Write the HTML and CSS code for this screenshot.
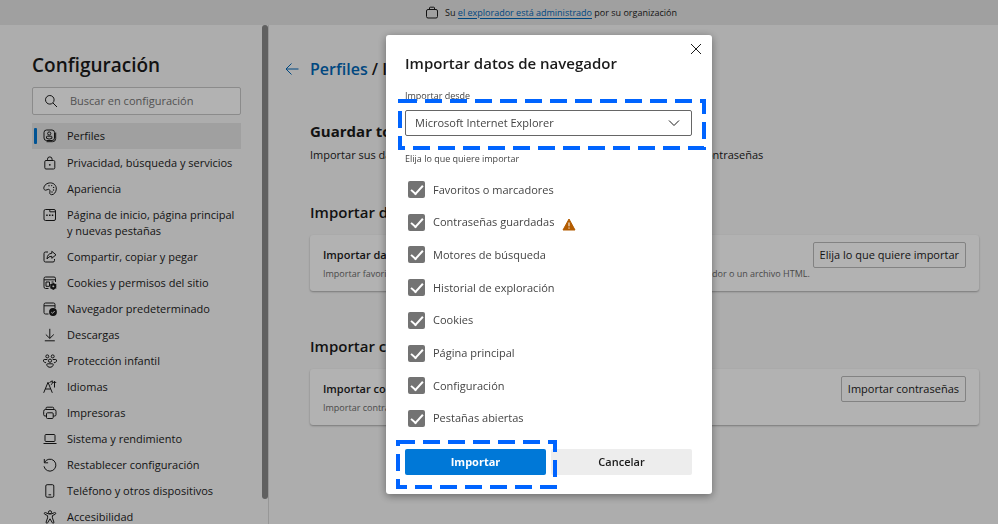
FILE: index.html
```html
<!DOCTYPE html>
<html lang="es">
<head>
<meta charset="utf-8">
<meta name="viewport" content="width=device-width, initial-scale=1">
<title>Configuración</title>
<link rel="stylesheet" href="styles.css">
</head>
<body>
<div class="banner">
  <svg class="banner-icon" viewBox="0 0 14 14"><rect x="1.500" y="3.500" width="11" height="8.500" rx="1.500"/><path d="M4.500 3.500V2q0-.8.8-.8h3.400q.8 0 .8.8v1.500"/></svg>
  <p>Su <a href="#">el explorador está administrado</a> por su organización</p>
</div>
<div class="layout">
  <aside class="sidebar">
    <h1>Configuración</h1>
    <div class="search">
      <svg class="icon" viewBox="0 0 14 14"><circle cx="5.8" cy="5.8" r="4.3"/><path d="m9 9 4 4"/></svg>
      <input type="search" placeholder="Buscar en configuración" aria-label="Buscar en configuración">
    </div>
    <nav>
      <a class="item active" href="#"><svg class="icon" viewBox="0 0 14 14"><rect x="1" y="1" width="10.500" height="10.500" rx="2.500"/><circle cx="6.200" cy="4.500" r="1.600"/><path d="M3.500 9.300V8q0-.8.8-.8h3.800q.8 0 .8.8v1.300q-2.700 1.600-5.400 0zM12.700 3.500v6q0 3.200-3.200 3.200h-6"/></svg><span>Perfiles</span></a>
      <a class="item" href="#"><svg class="icon" viewBox="0 0 14 14"><rect x="1.800" y="4.500" width="10" height="8.500" rx="1.200"/><path d="M4.500 4.500V3.200a2.300 2.300 0 0 1 4.600 0v1.300"/><circle class="solid" cx="6.800" cy="8.800" r=".9"/></svg><span>Privacidad, búsqueda y servicios</span></a>
      <a class="item" href="#"><svg class="icon" viewBox="0 0 14 14"><path d="M.8 6.200C.9 3.200 4 .8 7.500.9c3.500.1 6 2.700 5.800 6.200-.2 3.100-2.400 5.700-4.700 5.600-1.800-.1-2-1.300-1.700-2.600.3-1.500-.1-2.700-1.300-2.800-1.400-.1-1.700 1-3 .9C1.400 8.100.8 7.300.8 6.200z"/><g class="solid"><circle cx="6" cy="3.800" r=".7"/><circle cx="8.700" cy="3.600" r=".7"/><circle cx="10.600" cy="5.400" r=".7"/><circle cx="10.500" cy="8" r=".7"/><circle cx="9" cy="10" r=".7"/></g></svg><span>Apariencia</span></a>
      <a class="item" href="#"><svg class="icon" viewBox="0 0 14 14"><rect x="1" y="1.500" width="11.500" height="11" rx="1.500"/><path d="M6.800 1.500v2.300h5.700"/><g class="solid"><rect x="3.200" y="6.500" width="1.500" height="1.500"/><rect x="6" y="6.500" width="1.500" height="1.500"/><rect x="8.800" y="6.500" width="1.500" height="1.500"/></g></svg><span>Página de inicio, página principal y nuevas pestañas</span></a>
      <a class="item" href="#"><svg class="icon" viewBox="0 0 14 14"><path d="M5 2H2.500Q1 2 1 3.500v7Q1 12 2.500 12h7.500q1.500 0 1.500-1.500V9"/><path d="M8.800 1.300 13 4.800 8.800 8.300V6.300Q5.500 6.100 4 9q.2-5.300 4.800-5.700z"/></svg><span>Compartir, copiar y pegar</span></a>
      <a class="item" href="#"><svg class="icon" viewBox="0 0 14 14"><path d="M12.500 6V2.500Q12.500 1 11 1H2.500Q1 1 1 2.500v8.300Q1 12.500 2.500 12.500h3M1 3.800h11.500M3 6h3.500v4.300H3zM8.500 6h2"/><circle class="gear" cx="10.300" cy="10.300" r="2.100"/><path d="M10.300 6.800v7M7.300 8.500l6 3.600M7.300 12.100l6-3.600"/><circle class="hole" cx="10.300" cy="10.300" r=".9"/></svg><span>Cookies y permisos del sitio</span></a>
      <a class="item" href="#"><svg class="icon" viewBox="0 0 14 14"><path d="M12 6V2.500Q12 1 10.500 1H2.500Q1 1 1 2.500v8Q1 12 2.500 12H5.500M1 3.800h11"/><circle class="solid" cx="10" cy="10" r="3.900"/><path class="mark" d="m8.300 10.200 1.200 1.100 2.200-2.300"/></svg><span>Navegador predeterminado</span></a>
      <a class="item" href="#"><svg class="icon" viewBox="0 0 14 14"><path d="M6.800.8v9.500M2.800 6.500l4 3.900 4-3.900M1.800 12.800h10"/></svg><span>Descargas</span></a>
      <a class="item" href="#"><svg class="icon" viewBox="0 0 14 14"><circle cx="4.300" cy="2.400" r="1.500"/><circle cx="9.700" cy="2.400" r="1.500"/><circle cx="7" cy="6.700" r="1.600"/><path d="M4.300 5.500H1.200Q-.1 5.700.5 7.200q.7 1.500 2.600 1.600M9.700 5.500h3.100q1.300.2.700 1.700-.7 1.500-2.600 1.600M4.500 9.800h5q1 .1.700 1.400-.7 2.100-3.200 2.100t-3.200-2.100q-.3-1.300.7-1.400z"/></svg><span>Protección infantil</span></a>
      <a class="item" href="#"><svg class="icon" viewBox="0 0 14 14"><path d="M.7 12.800 5 2.300l4.300 10.500M2.300 9h5.400M6.500 2.500l2.800-1.700v2.700L7.800 4.800M11.500 7.500V1.300M9.800 3l1.700-1.700L13.200 3"/></svg><span>Idiomas</span></a>
      <a class="item" href="#"><svg class="icon" viewBox="0 0 14 14"><path d="M3.500 10H2Q.7 10 .7 8.700V5.300Q.7 3.500 2.500 3.500h8.700q1.800 0 1.800 1.800v3.400Q13 10 11.700 10h-1.500M3 3.500V2.300Q3 1.200 4.100 1.200h5.500q1.100 0 1.100 1.100v1.200"/><rect x="3.500" y="6.800" width="6.700" height="5.700" rx="1"/></svg><span>Impresoras</span></a>
      <a class="item" href="#"><svg class="icon" viewBox="0 0 14 14"><rect x="2" y="2.500" width="10" height="7" rx="1"/><path d="M.5 11.500h13"/></svg><span>Sistema y rendimiento</span></a>
      <a class="item" href="#"><svg class="icon" viewBox="0 0 14 14"><path d="M1.500 4.500a6 6 0 1 1-.5 3.800M1.300 1v3.800h3.800"/></svg><span>Restablecer configuración</span></a>
      <a class="item" href="#"><svg class="icon" viewBox="0 0 14 14"><rect x="2.800" y=".7" width="8" height="12.500" rx="1.300"/><path d="M5.500 10.800h2.600"/></svg><span>Teléfono y otros dispositivos</span></a>
      <a class="item" href="#"><svg class="icon" viewBox="0 0 14 14"><circle cx="7" cy="2.300" r="1.600"/><path d="M5.300 3.800 2.500 2.600q-1.200-.2-1.200.8 0 .6.600.9l2.700 1.300v2.200l-1.500 4.300q-.1 1.100.8 1.200.6 0 .9-.8L7 8.800l2.200 3.700q.3.800.9.800.9-.1.800-1.200L9.400 7.800V5.600l2.700-1.300q.6-.3.600-.9 0-1-1.200-.8L8.700 3.800z"/></svg><span>Accesibilidad</span></a>
    </nav>
  </aside>
  <div class="scrollbar"><div class="thumb"></div></div>
  <main>
    <div class="crumbs">
      <svg class="back" viewBox="0 0 14 14"><path d="M13.500 7H1M6.500 1.500 1 7l5.500 5.500"/></svg>
      <p><a href="#">Perfiles</a> / Importar</p>
    </div>
    <h2 class="lead">Guardar todo en un solo lugar</h2>
    <p class="intro">Importar sus datos de exploración para usar aquí sus favoritos, historiales y contraseñas</p>
    <section>
      <h2>Importar datos</h2>
      <div class="card">
        <div>
          <h3>Importar datos</h3>
          <p>Importar favoritos, contraseñas, historiales, cookies y diversos elementos desde otro explorador o un archivo HTML.</p>
        </div>
        <button type="button">Elija lo que quiere importar</button>
      </div>
    </section>
    <section>
      <h2>Importar contraseñas</h2>
      <div class="card">
        <div>
          <h3>Importar contraseñas</h3>
          <p>Importar contraseñas desde un archivo CSV</p>
        </div>
        <button type="button">Importar contraseñas</button>
      </div>
    </section>
  </main>
</div>
<div class="backdrop">
  <form class="dialog" role="dialog" aria-labelledby="dialog-title">
    <button class="close" type="button" aria-label="Cerrar"><svg viewBox="0 0 12 12"><path d="m1 1 10 10M11 1 1 11"/></svg></button>
    <h2 id="dialog-title">Importar datos de navegador</h2>
    <label class="caption" for="source">Importar desde</label>
    <div class="select">
      <select id="source"><option>Microsoft Internet Explorer</option></select>
      <svg class="chevron" viewBox="0 0 12 8"><path d="m1 1.500 5 5 5-5"/></svg>
      <svg class="highlight highlight-source" viewBox="0 0 308 51"><rect x="2" y="2" width="304" height="47"/></svg>
    </div>
    <div class="group" role="group" aria-labelledby="group-title">
      <p class="caption" id="group-title">Elija lo que quiere importar</p>
      <div class="options">
        <label><input type="checkbox" checked><span>Favoritos o marcadores</span></label>
        <label><input type="checkbox" checked><span>Contraseñas guardadas</span><svg class="warning" viewBox="0 0 14 13"><path d="M7 1 13 12H1z"/><path class="bang" d="M7 4.500v3.800M7 9.500v1.200"/></svg></label>
        <label><input type="checkbox" checked><span>Motores de búsqueda</span></label>
        <label><input type="checkbox" checked><span>Historial de exploración</span></label>
        <label><input type="checkbox" checked><span>Cookies</span></label>
        <label><input type="checkbox" checked><span>Página principal</span></label>
        <label><input type="checkbox" checked><span>Configuración</span></label>
        <label><input type="checkbox" checked><span>Pestañas abiertas</span></label>
      </div>
    </div>
    <div class="actions">
      <button class="primary" type="button">Importar</button>
      <button type="button">Cancelar</button>
      <svg class="highlight highlight-import" viewBox="0 0 161 49"><rect x="2" y="2" width="157" height="45"/></svg>
    </div>
  </form>
</div>
</body>
</html>
```
FILE: styles.css
```css
* {
  box-sizing: border-box;
}

body {
  display: flex;
  flex-direction: column;
  height: 100vh;
  margin: 0;
  overflow: hidden;
  background: #f8f8f8;
  color: #1b1b1b;
  font: 11px/16px "Segoe UI", "Open Sans", sans-serif;
}

h1, h2, h3, p {
  margin: 0;
}

a {
  color: #0067b8;
}

button, input, select {
  font: inherit;
  color: inherit;
}

svg {
  flex: none;
  fill: none;
  stroke: currentColor;
  stroke-width: 1;
}

.banner {
  display: flex;
  flex: none;
  align-items: center;
  justify-content: center;
  gap: 6px;
  height: 25px;
  padding-left: 104px;
  background: #e6e6e6;
  font-size: 9px;
}

.banner a {
  text-underline-offset: 2px;
}

.banner-icon {
  width: 14px;
  height: 14px;
}

.layout {
  display: flex;
  flex: 1;
  min-height: 0;
}

/* Sidebar */

.sidebar {
  flex: none;
  width: 262px;
  padding: 27px 21px 0 32px;
  overflow: hidden;
}

h1 {
  font-size: 19px;
  line-height: 26px;
  font-weight: 600;
}

.icon {
  width: 14px;
  height: 14px;
}

.icon .solid {
  fill: currentColor;
  stroke: none;
}

.icon .gear {
  stroke-width: 2;
}

.icon .hole {
  fill: #f8f8f8;
  stroke: none;
}

.icon .mark {
  stroke: #f8f8f8;
}

.search {
  display: flex;
  align-items: center;
  gap: 12px;
  height: 28px;
  margin: 9px 0 8px;
  padding: 0 11px;
  border: 1px solid #c8c8c8;
  border-radius: 2px;
  background: #fff;
}

.search input {
  flex: 1;
  min-width: 0;
  padding: 0;
  border: 0;
  outline: 0;
  background: none;
}

.search input::placeholder {
  color: #767676;
}

.item {
  display: flex;
  gap: 10px;
  padding: 5px 4px 5px 11px;
  color: inherit;
  text-decoration: none;
}

.item .icon {
  margin-top: 1px;
}

.active {
  position: relative;
  margin-bottom: 1px;
  background: #e6e6e6;
}

.active::before {
  position: absolute;
  top: 5px;
  bottom: 5px;
  left: 2px;
  width: 3px;
  border-radius: 1px;
  background: #0078d4;
  content: "";
}

.scrollbar {
  flex: none;
  width: 7px;
  border-right: 1px solid #d8d8d8;
}

.thumb {
  height: 95%;
  max-height: 476px;
  border-radius: 3px;
  background: #8a8a8a;
}

/* Page behind the dialog */

main {
  flex: 1;
  min-width: 0;
  padding: 32px 19px 0 41px;
}

.crumbs {
  display: flex;
  align-items: center;
  gap: 11px;
  margin-left: -25px;
  font-size: 16px;
  line-height: 24px;
  font-weight: 600;
}

.crumbs a {
  text-decoration: none;
}

.back {
  width: 14px;
  height: 14px;
  color: #0067b8;
}

main h2 {
  font-size: 15px;
  line-height: 24px;
  font-weight: 600;
}

main .lead {
  margin-top: 38px;
  font-weight: 700;
}

.intro {
  margin: 4px 0 37px;
}

.card {
  display: flex;
  align-items: flex-start;
  justify-content: space-between;
  min-height: 56px;
  margin: 11px 0 43px;
  padding: 7px 13px 8px;
  border-radius: 3px;
  background: #fff;
  box-shadow: 0 1px 2px rgba(0, 0, 0, .3);
}

.card > div {
  padding-top: 5px;
}

.card h3 {
  font-size: 11px;
  line-height: 16px;
  font-weight: 600;
}

.card p {
  margin-top: 3px;
  color: #6b6b6b;
  font-size: 9px;
}

.card button {
  flex: none;
  height: 26px;
  padding: 0 6px;
  border: 1px solid #bbb;
  border-radius: 2px;
  background: #fff;
}

/* Dialog */

.backdrop {
  position: fixed;
  inset: 0;
  display: flex;
  align-items: flex-start;
  justify-content: center;
  padding: 35px 0 0 100px;
  background: rgba(0, 0, 0, .3);
}

.dialog {
  position: relative;
  display: flex;
  flex-direction: column;
  width: 326px;
  min-height: 459px;
  padding: 16px 20px 19px 19px;
  border-radius: 3px;
  background: #fff;
  box-shadow: 0 2px 8px rgba(0, 0, 0, .4);
}

.dialog h2 {
  font-size: 15px;
  line-height: 24px;
  font-weight: 600;
}

.close {
  position: absolute;
  top: 4px;
  right: 6px;
  display: grid;
  place-items: center;
  width: 20px;
  height: 20px;
  padding: 0;
  border: 0;
  background: none;
}

.close svg {
  width: 12px;
  height: 12px;
}

.caption {
  padding: 0;
  color: #444;
  font-size: 9px;
}

label.caption {
  margin-top: 13px;
}

.select {
  position: relative;
  margin-top: 6px;
}

.select select {
  display: block;
  width: 100%;
  height: 26px;
  padding: 0 9px;
  border: 1px solid #666;
  border-radius: 2px;
  background: #fff;
  color: #444;
  appearance: none;
}

.chevron {
  position: absolute;
  top: 9px;
  right: 12px;
  width: 12px;
  height: 8px;
}

.highlight {
  position: absolute;
  stroke: #0064ff;
  stroke-width: 4;
  stroke-dasharray: 17 8;
  pointer-events: none;
}

.highlight-source {
  top: -11px;
  left: -7px;
  width: 308px;
  height: 51px;
}

.highlight-import {
  top: -9px;
  left: -9px;
  width: 161px;
  height: 49px;
}

.group {
  display: flex;
  flex: 1;
  flex-direction: column;
  margin-top: 15px;
}

.options {
  display: flex;
  flex: 1;
  flex-direction: column;
  justify-content: space-between;
  padding: 14px 3px 22px;
}

.options label {
  display: flex;
  align-items: center;
  gap: 8px;
  height: 17px;
  color: #444;
}

.options input {
  display: grid;
  place-items: center;
  width: 17px;
  height: 17px;
  margin: 0;
  border-radius: 2px;
  background: #737373;
  appearance: none;
}

.options input:checked::after {
  width: 10px;
  height: 5px;
  border: solid #fff;
  border-width: 0 0 2px 2px;
  transform: translateY(-1px) rotate(-48deg);
  content: "";
}

.warning {
  width: 14px;
  height: 13px;
  margin-top: 5px;
  fill: #b35c00;
  stroke: #b35c00;
  stroke-linejoin: round;
}

.warning .bang {
  stroke: #fff;
}

.actions {
  position: relative;
  display: grid;
  grid-template-columns: 1fr 1fr;
  gap: 5px;
}

.actions button {
  height: 26px;
  padding: 0;
  border: 0;
  border-radius: 2px;
  background: #ededed;
  font-weight: 600;
}

.actions .primary {
  background: #0078d7;
  color: #fff;
  font-weight: 700;
}
```
